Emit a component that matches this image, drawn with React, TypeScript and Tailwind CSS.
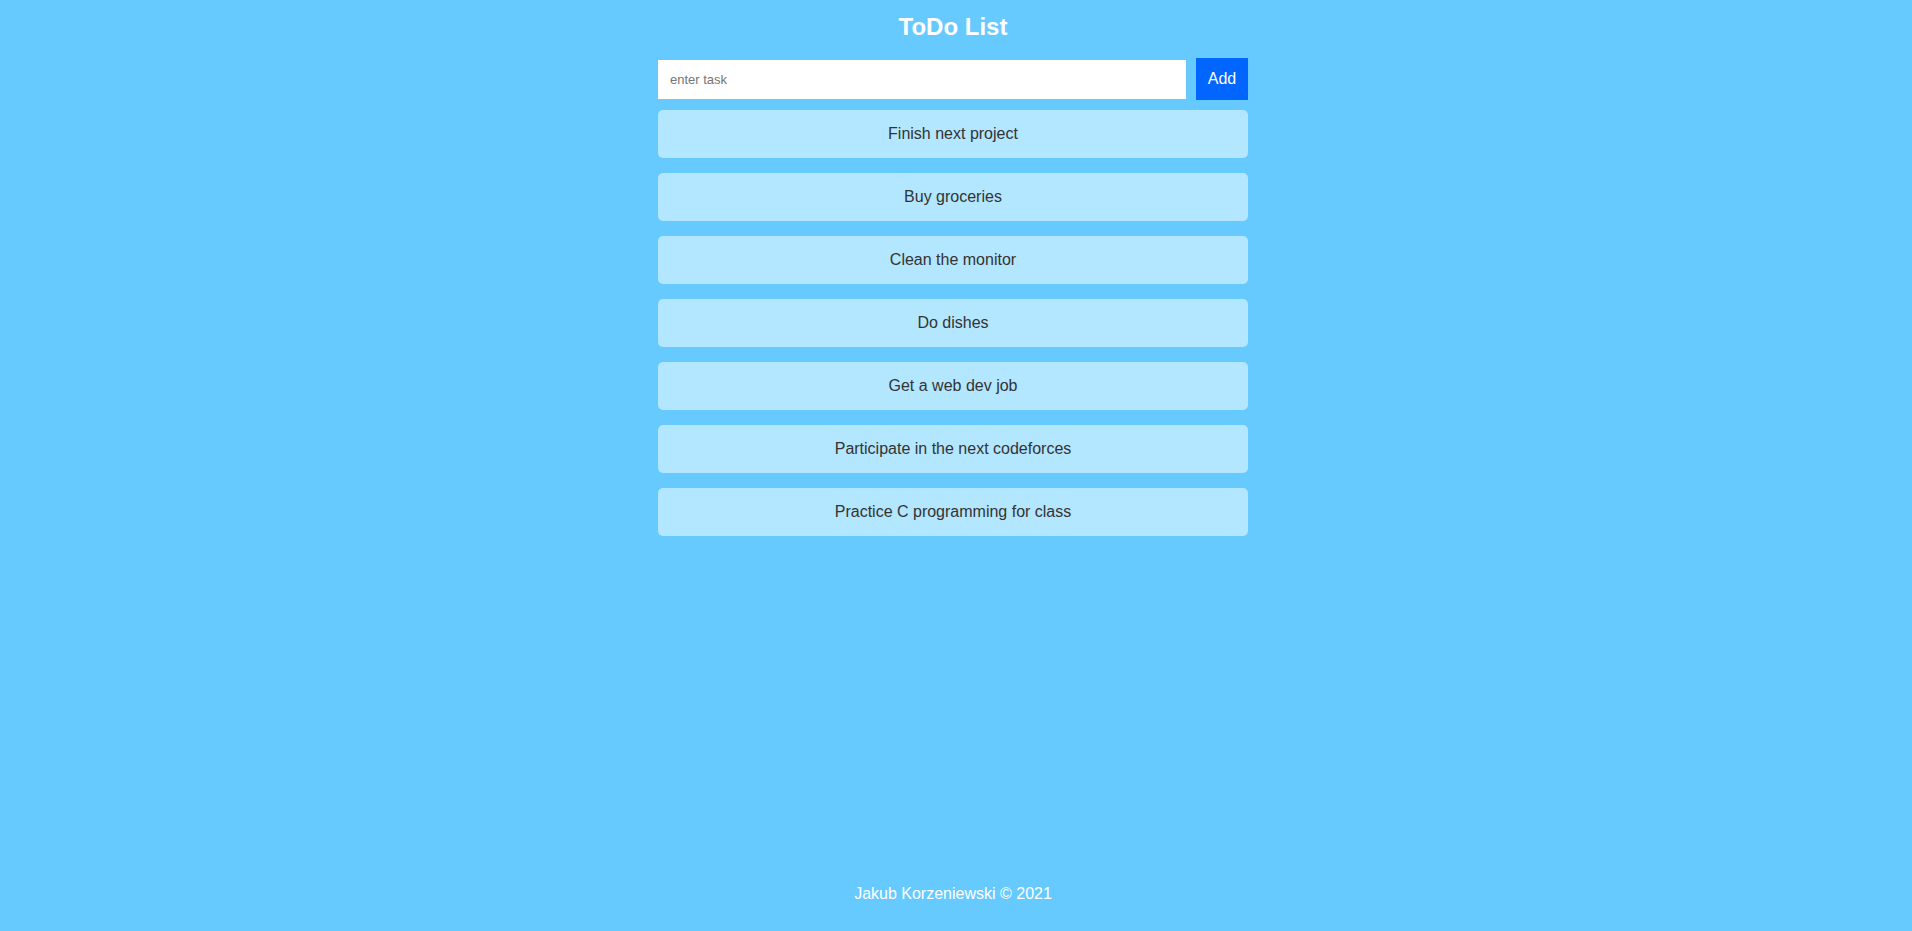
import { useState } from 'react';

const initialTasks = [
    'Finish next project',
    'Buy groceries',
    'Clean the monitor',
    'Do dishes',
    'Get a web dev job',
    'Participate in the next codeforces',
    'Practice C programming for class',
];

export default function App() {
    const [tasks, setTasks] = useState(initialTasks);
    const [task, setTask] = useState('');

    const addTask = () => {
        if (!task.trim()) return;
        setTasks([...tasks, task.trim()]);
        setTask('');
    };

    return (
        <div className="min-h-screen flex flex-col bg-[#66caff] pr-[6px] font-['Liberation_Sans',Arial,sans-serif]">
            <main className="flex-1 w-[590px] mx-auto">
                <h1 className="mt-[13px] text-[24px] leading-[28px] font-bold text-white text-center">
                    ToDo List
                </h1>

                <form
                    className="mt-[17px] flex items-center gap-[10px]"
                    onSubmit={(e) => {
                        e.preventDefault();
                        addTask();
                    }}
                >
                    <input
                        type="text"
                        value={task}
                        onChange={(e) => setTask(e.target.value)}
                        placeholder="enter task"
                        className="flex-1 h-[39px] bg-white px-[12px] text-[13px] text-[#333] placeholder:text-[#757575] outline-none"
                    />
                    <button
                        type="submit"
                        className="w-[52px] h-[42px] bg-[#0066ff] text-white text-[16px]"
                    >
                        Add
                    </button>
                </form>

                <ul className="mt-[10px] flex flex-col gap-[15px]">
                    {tasks.map((t, i) => (
                        <li
                            key={i}
                            className="h-[48px] flex items-center justify-center rounded-[5px] bg-[#b3e6ff] text-[16px] text-[#333]"
                        >
                            {t}
                        </li>
                    ))}
                </ul>
            </main>

            <footer className="pb-[28px] text-center text-[16px] leading-[18px] text-white">
                Jakub Korzeniewski © 2021
            </footer>
        </div>
    );
}
